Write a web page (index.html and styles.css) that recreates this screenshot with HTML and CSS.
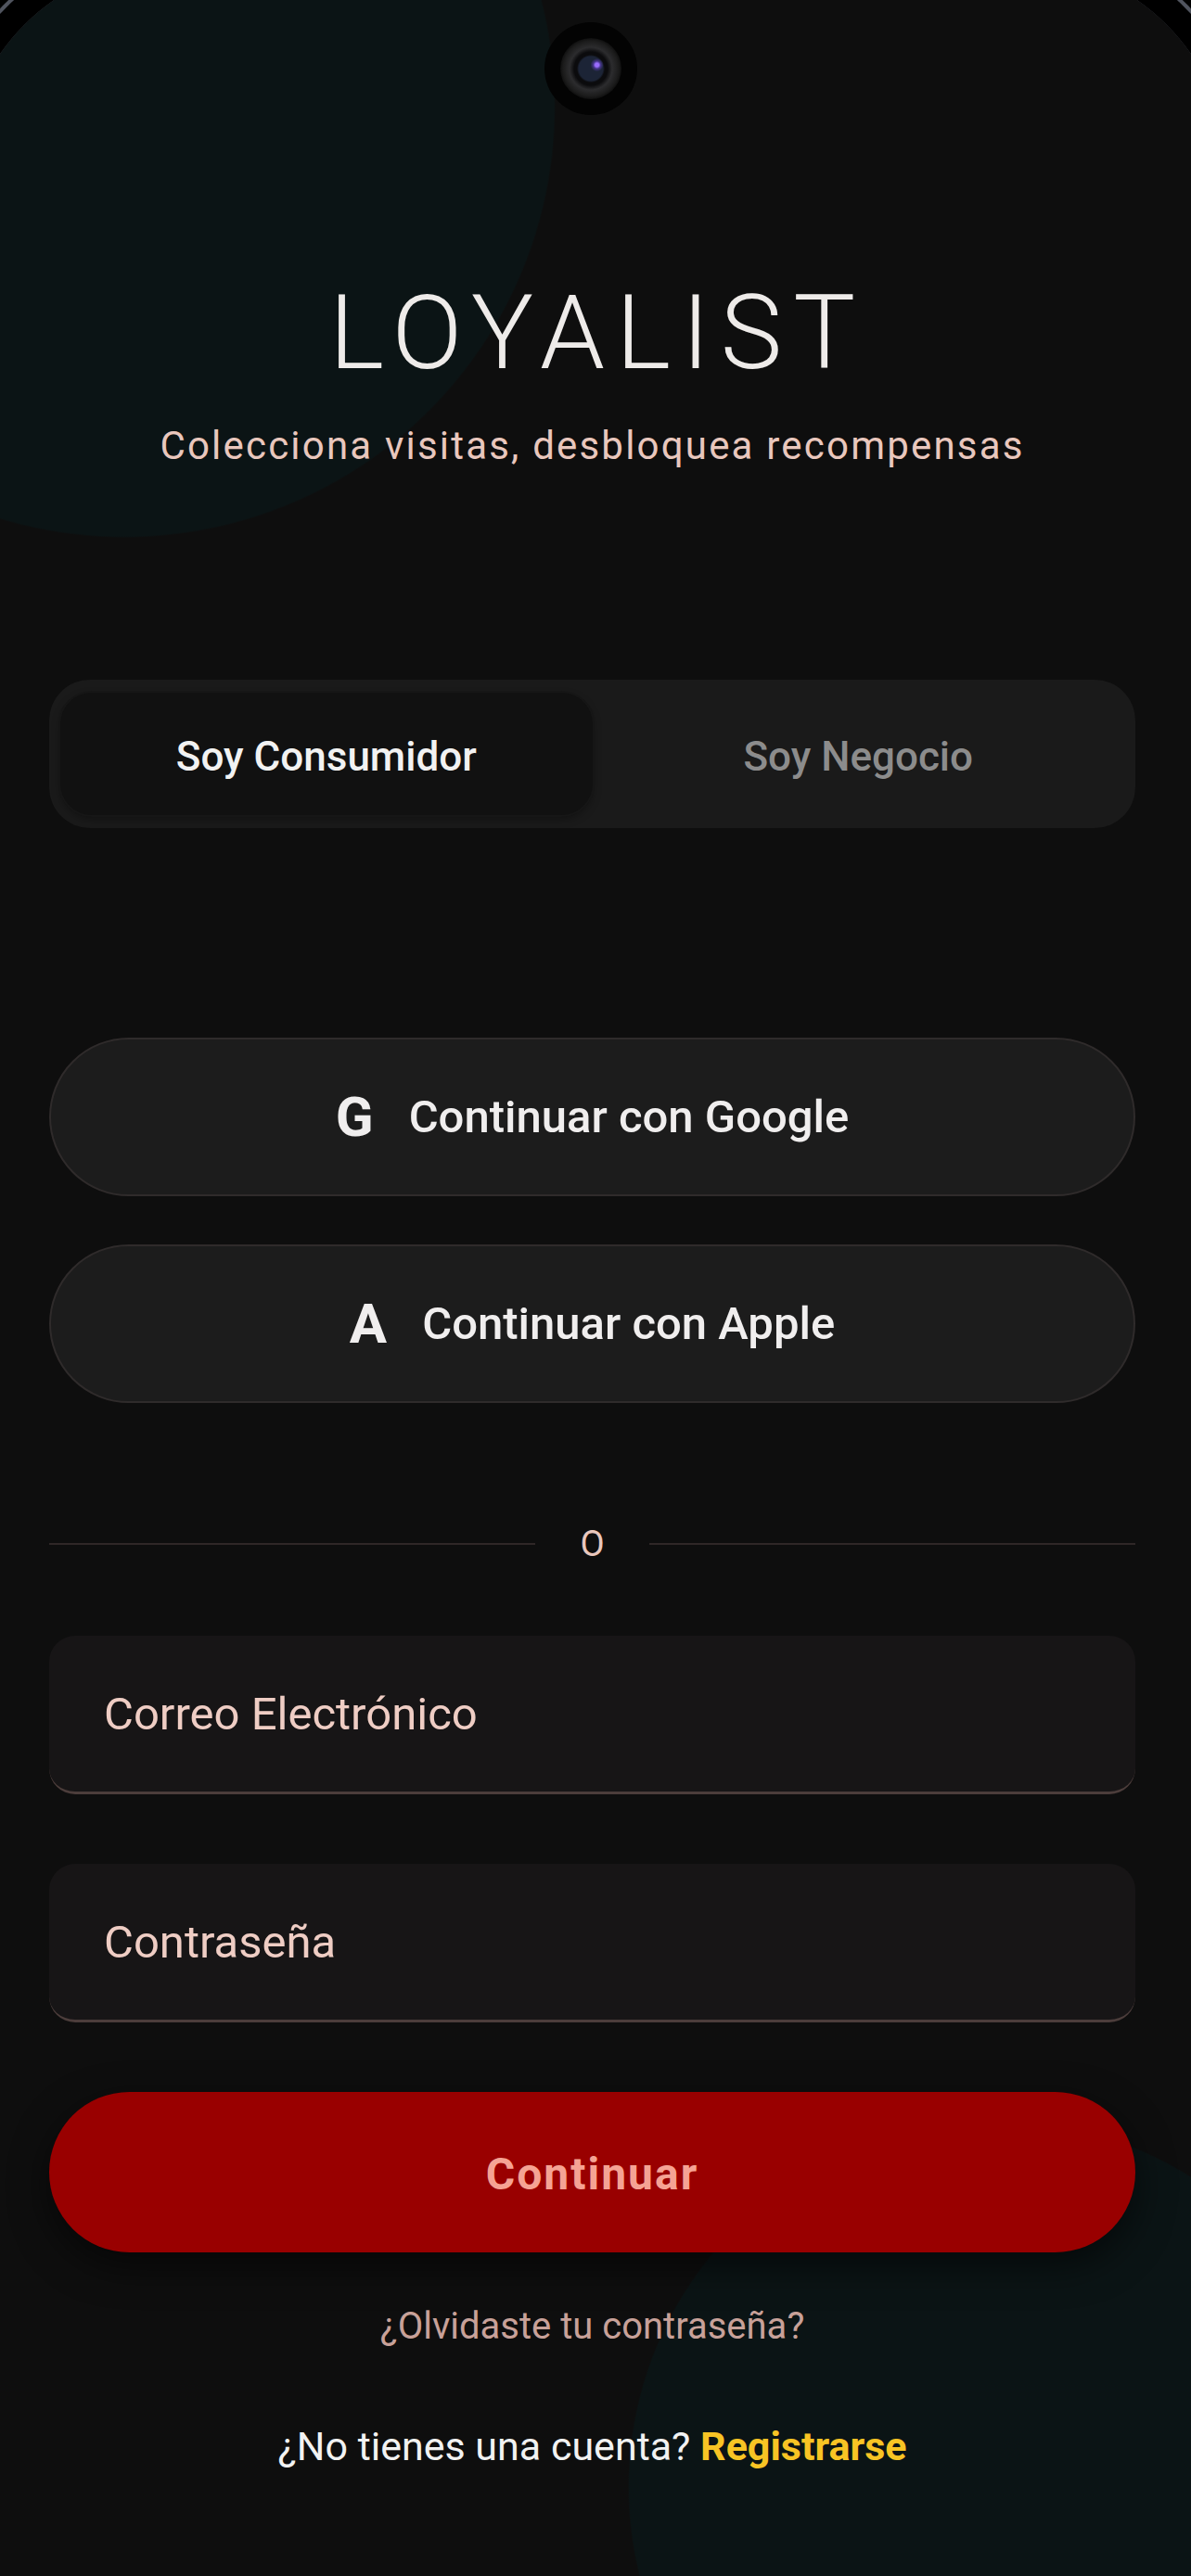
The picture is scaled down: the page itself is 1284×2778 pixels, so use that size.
FILE: index.html
```html
<!DOCTYPE html>
<html lang="es">
<head>
    <meta charset="UTF-8">
    <meta name="viewport" content="width=device-width, initial-scale=1.0">
    <title>Loyalist - Iniciar sesión</title>
    <link rel="stylesheet" href="styles.css">
</head>
<body>
    <div class="screen">
        <header class="hero">
            <h1 class="brand">LOYALIST</h1>
            <p class="tagline">Colecciona visitas, desbloquea recompensas</p>
        </header>

        <div class="segmented">
            <button class="segment active">Soy Consumidor</button>
            <button class="segment">Soy Negocio</button>
        </div>

        <div class="social">
            <button class="social-btn"><span class="social-icon">G</span>Continuar con Google</button>
            <button class="social-btn"><span class="social-icon">A</span>Continuar con Apple</button>
        </div>

        <div class="divider"><span>o</span></div>

        <form class="login">
            <input class="field" type="email" placeholder="Correo Electrónico">
            <input class="field" type="password" placeholder="Contraseña">
            <button class="primary" type="button">Continuar</button>
        </form>

        <a class="forgot" href="#">¿Olvidaste tu contraseña?</a>
        <p class="signup">¿No tienes una cuenta? <a href="#">Registrarse</a></p>
    </div>

    <!-- device frame + punch-hole camera, sit on top of the page -->
    <div class="bezel"></div>
    <div class="camera"><div class="lens"></div></div>
</body>
</html>
```

FILE: styles.css
```css
body {
    margin: 0;
    width: 1284px;
    height: 2778px;
    overflow: hidden;
    position: relative;
    font-family: Roboto, "Noto Sans", sans-serif;
    color: #f0f0f0;
    background:
        radial-gradient(circle 465px at 134px 115px, #0b1415 99.6%, transparent 100%),
        radial-gradient(circle 396px at 1073px 2682px, #0b1415 99.6%, transparent 100%),
        #0e0e0e;
}
button,
input {
    font-family: inherit;
}
.screen {
    padding: 303px 60px 0 53px;
}
.brand {
    margin: 0;
    padding-left: 12px;
    font-size: 112px;
    font-weight: 300;
    line-height: 112px;
    letter-spacing: 12px;
    text-align: center;
    color: #eeebe9;
}
.tagline {
    margin: 41px 0 0;
    font-size: 42px;
    line-height: 50px;
    letter-spacing: 2.2px;
    text-align: center;
    color: #e9c7bd;
}
.segmented {
    margin-top: 227px;
    height: 160px;
    box-sizing: border-box;
    padding: 14px 12px;
    background-color: #1a1a1a;
    border-radius: 44px;
    display: grid;
    grid-template-columns: 1fr 1fr;
}
.segment {
    border: none;
    background: transparent;
    padding-top: 6px;
    font-size: 44px;
    font-weight: 500;
    color: #8c8c8c;
    border-radius: 34px;
}
.segment.active {
    background-color: #111111;
    color: #f2f2f2;
    box-shadow: 0 0 0 2px #161616, 0 4px 10px rgba(0, 0, 0, 0.35);
}
.social {
    margin-top: 226px;
    display: flex;
    flex-direction: column;
    gap: 52px;
}
.social-btn {
    height: 171px;
    border-radius: 86px;
    background-color: #1c1c1c;
    border: 2px solid #2f2b2b;
    color: #f0eeee;
    font-size: 49px;
    font-weight: 500;
    display: flex;
    align-items: center;
    justify-content: center;
    gap: 38px;
}
.social-icon {
    font-size: 60px;
    font-weight: 700;
}
.divider {
    margin-top: 132px;
    height: 40px;
    display: flex;
    align-items: center;
    gap: 48px;
    font-size: 38px;
    text-transform: uppercase;
    color: #e9c7bd;
}
.divider::before,
.divider::after {
    content: "";
    flex: 1;
    height: 2px;
    background-color: #2f2727;
}
.login {
    margin-top: 79px;
    display: flex;
    flex-direction: column;
    gap: 75px;
}
.field {
    height: 171px;
    box-sizing: border-box;
    border: none;
    border-bottom: 3px solid #4c3d3b;
    border-radius: 28px;
    background-color: #171516;
    padding: 0 0 0 59px;
    font-size: 49px;
    color: #efcdc4;
    outline: none;
}
.field::placeholder {
    color: #efcdc4;
    opacity: 1;
}
.primary {
    height: 173px;
    border: none;
    border-radius: 87px;
    background-color: #990000;
    color: #f5a394;
    padding-top: 4px;
    font-size: 48px;
    font-weight: 700;
    letter-spacing: 2px;
    box-shadow: 0 14px 40px rgba(0, 0, 0, 0.55);
}
.forgot {
    display: block;
    margin-top: 56px;
    text-align: center;
    font-size: 40px;
    line-height: 48px;
    color: #c8a199;
    text-decoration: none;
}
.signup {
    margin: 80px 0 0;
    text-align: center;
    font-size: 43px;
    line-height: 50px;
    color: #f2f2f2;
}
.signup a {
    color: #f8c424;
    font-weight: 700;
    text-decoration: none;
}
.bezel {
    position: absolute;
    left: -40px;
    top: -40px;
    width: 1364px;
    height: 2818px;
    border-radius: 227px 227px 0 0;
    box-shadow: 0 0 0 27px #000, 0 0 0 31px #50545e, 0 0 0 200px #000;
    pointer-events: none;
}
.camera {
    position: absolute;
    left: 587px;
    top: 24px;
    width: 100px;
    height: 100px;
    border-radius: 50%;
    background-color: #030303;
    display: flex;
    align-items: center;
    justify-content: center;
}
.lens {
    width: 66px;
    height: 66px;
    border-radius: 50%;
    background:
        radial-gradient(circle at 60% 44%, #9a6cff 0 2px, rgba(110, 70, 220, 0.5) 4px, transparent 7px),
        radial-gradient(circle, #1c2436 0 13px, #0b0b0d 15px 18px, #2c2c2e 23px, #1b1b1b 30px, #0f0f0f 33px);
}
```
